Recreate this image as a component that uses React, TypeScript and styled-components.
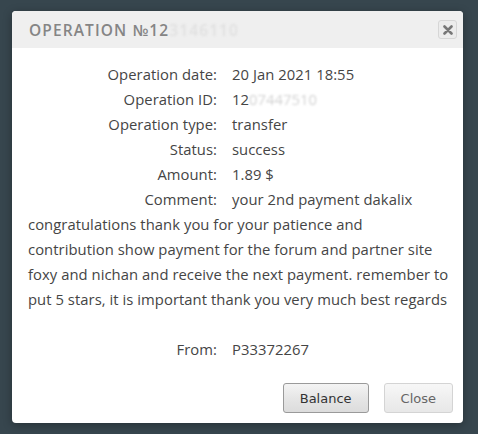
import React from "react"
import styled, { createGlobalStyle } from "styled-components"

const GlobalStyle = createGlobalStyle`
  html, body {
    margin: 0;
    padding: 0;
    background: #37464e;
  }
`

const Page = styled.div`
  width: 478px;
  height: 434px;
  padding: 11px 0 0 12px;
  box-sizing: border-box;
  background: #37464e;
  font-family: "Open Sans", "Liberation Sans", sans-serif;
`

const Modal = styled.div`
  width: 451px;
  height: 412px;
  background: #fff;
  border-radius: 4px;
  overflow: hidden;
  display: flex;
  flex-direction: column;
  box-shadow: 0 2px 10px rgba(0, 0, 0, 0.3);
`

const Header = styled.div`
  flex-shrink: 0;
  height: 37px;
  background: #efefef;
  display: flex;
  align-items: center;
  justify-content: space-between;
  padding: 0 6px 0 17px;
`

const Title = styled.div`
  font-size: 15.5px;
  font-weight: 600;
  letter-spacing: 1.1px;
  color: #858585;
  text-transform: uppercase;
`

const Hidden = styled.span<{ tone: string }>`
  color: ${(p) => p.tone};
  filter: blur(1.1px);
`

const CloseX = styled.button`
  width: 19px;
  height: 19px;
  padding: 0;
  border: 1px solid #d6d6d6;
  border-radius: 3px;
  background: #ececec;
  display: flex;
  align-items: center;
  justify-content: center;
`

const Body = styled.div`
  flex: 1;
  padding: 14px 13px 0 16px;
  font-size: 14.8px;
  letter-spacing: 0.05px;
  line-height: 25px;
  color: #454545;
`

const Row = styled.div<{ gap?: boolean }>`
  margin-top: ${(p) => (p.gap ? "25px" : "0")};
`

const Label = styled.span`
  display: inline-block;
  width: 189px;
  margin-right: 15px;
  text-align: right;
`

const Footer = styled.div`
  flex-shrink: 0;
  display: flex;
  justify-content: flex-end;
  gap: 15px;
  padding: 0 10px 10px 0;
`

const Button = styled.button<{ primary?: boolean }>`
  height: 30px;
  padding: 0 16px;
  border-radius: 3px;
  border: 1px solid ${(p) => (p.primary ? "#9a9a9a" : "#d4d4d4")};
  background: ${(p) =>
    p.primary
      ? "linear-gradient(#f4f4f4, #e6e6e6 50%, #dcdcdc)"
      : "linear-gradient(#f7f7f7, #efefef 50%, #e8e8e8)"};
  color: ${(p) => (p.primary ? "#333" : "#666")};
  font-family: "DejaVu Sans", "Liberation Sans", sans-serif;
  font-size: 13px;
`

const rows: [string, React.ReactNode][] = [
  ["Operation date:", "20 Jan 2021 18:55"],
  [
    "Operation ID:",
    <>
      12<Hidden tone="#d2d2d2">07447510</Hidden>
    </>,
  ],
  ["Operation type:", "transfer"],
  ["Status:", "success"],
  ["Amount:", "1.89 $"],
]

export default function App() {
  return (
    <Page>
      <GlobalStyle />
      <Modal>
        <Header>
          <Title>
            Operation №12<Hidden tone="#e0e0e0">3146110</Hidden>
          </Title>
          <CloseX>
            <svg width="10" height="10" viewBox="0 0 10 10">
              <path d="M1.5 1.5 L8.5 8.5 M8.5 1.5 L1.5 8.5" stroke="#777" strokeWidth="2.6" strokeLinecap="round" />
            </svg>
          </CloseX>
        </Header>
        <Body>
          {rows.map(([label, value]) => (
            <Row key={label}>
              <Label>{label}</Label>
              {value}
            </Row>
          ))}
          <Row>
            <Label>Comment:</Label>
            your 2nd payment dakalix congratulations thank you for your patience and
            contribution show payment for the forum and partner site foxy and nichan
            and receive the next payment. remember to put 5 stars, it is important
            thank you very much best regards
          </Row>
          <Row gap>
            <Label>From:</Label>
            P33372267
          </Row>
        </Body>
        <Footer>
          <Button primary>Balance</Button>
          <Button>Close</Button>
        </Footer>
      </Modal>
    </Page>
  )
}
